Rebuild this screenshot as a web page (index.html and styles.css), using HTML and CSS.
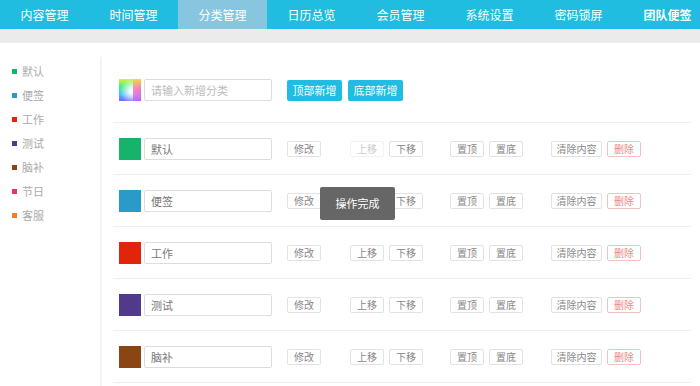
FILE: index.html
```html
<!DOCTYPE html>
<html lang="zh-CN">
<head>
    <meta charset="utf-8">
    <title>分类管理</title>
    <link rel="stylesheet" href="styles.css">
</head>
<body>
    <nav class="topnav">
        <a class="nav-item">内容管理</a>
        <a class="nav-item">时间管理</a>
        <a class="nav-item active">分类管理</a>
        <a class="nav-item">日历总览</a>
        <a class="nav-item">会员管理</a>
        <a class="nav-item">系统设置</a>
        <a class="nav-item">密码锁屏</a>
        <a class="nav-item team">团队便签</a>
    </nav>
    <div class="subbar"></div>

    <div class="layout">
        <aside class="sidebar">
            <div class="side-item"><span class="dot c-green"></span>默认</div>
            <div class="side-item"><span class="dot c-blue"></span>便签</div>
            <div class="side-item"><span class="dot c-red"></span>工作</div>
            <div class="side-item"><span class="dot c-purple"></span>测试</div>
            <div class="side-item"><span class="dot c-brown"></span>脑补</div>
            <div class="side-item"><span class="dot c-pink"></span>节日</div>
            <div class="side-item"><span class="dot c-orange"></span>客服</div>
        </aside>

        <main class="content">
            <div class="row add-row">
                <span class="swatch picker"></span>
                <input class="name-input" type="text" placeholder="请输入新增分类">
                <div class="add-buttons">
                    <button class="btn-add">顶部新增</button>
                    <button class="btn-add">底部新增</button>
                </div>
            </div>

            <div class="row">
                <span class="swatch c-green"></span>
                <input class="name-input" type="text" value="默认">
                <div class="actions">
                    <button class="btn">修改</button>
                    <div class="group move"><button class="btn disabled">上移</button><button class="btn">下移</button></div>
                    <div class="group pin"><button class="btn">置顶</button><button class="btn">置底</button></div>
                    <div class="group clear"><button class="btn wide">清除内容</button><button class="btn danger">删除</button></div>
                </div>
            </div>

            <div class="row">
                <span class="swatch c-blue"></span>
                <input class="name-input" type="text" value="便签">
                <div class="actions">
                    <button class="btn">修改</button>
                    <div class="group move"><button class="btn">上移</button><button class="btn">下移</button></div>
                    <div class="group pin"><button class="btn">置顶</button><button class="btn">置底</button></div>
                    <div class="group clear"><button class="btn wide">清除内容</button><button class="btn danger">删除</button></div>
                </div>
            </div>

            <div class="row">
                <span class="swatch c-red"></span>
                <input class="name-input" type="text" value="工作">
                <div class="actions">
                    <button class="btn">修改</button>
                    <div class="group move"><button class="btn">上移</button><button class="btn">下移</button></div>
                    <div class="group pin"><button class="btn">置顶</button><button class="btn">置底</button></div>
                    <div class="group clear"><button class="btn wide">清除内容</button><button class="btn danger">删除</button></div>
                </div>
            </div>

            <div class="row">
                <span class="swatch c-purple"></span>
                <input class="name-input" type="text" value="测试">
                <div class="actions">
                    <button class="btn">修改</button>
                    <div class="group move"><button class="btn">上移</button><button class="btn">下移</button></div>
                    <div class="group pin"><button class="btn">置顶</button><button class="btn">置底</button></div>
                    <div class="group clear"><button class="btn wide">清除内容</button><button class="btn danger">删除</button></div>
                </div>
            </div>

            <div class="row">
                <span class="swatch c-brown"></span>
                <input class="name-input" type="text" value="脑补">
                <div class="actions">
                    <button class="btn">修改</button>
                    <div class="group move"><button class="btn">上移</button><button class="btn">下移</button></div>
                    <div class="group pin"><button class="btn">置顶</button><button class="btn">置底</button></div>
                    <div class="group clear"><button class="btn wide">清除内容</button><button class="btn danger">删除</button></div>
                </div>
            </div>
        </main>
    </div>

    <div class="toast">操作完成</div>
</body>
</html>
```

FILE: styles.css
```css
* {
    box-sizing: border-box;
    margin: 0;
    padding: 0;
}

body {
    font-family: "Noto Sans CJK SC", "Liberation Sans", sans-serif;
    background: #fff;
    color: #666;
    overflow: hidden;
}

/* Top navigation */
.topnav {
    display: flex;
    height: 29px;
    background: #20bde0;
}

.nav-item {
    flex: 0 0 89px;
    text-align: center;
    line-height: 29px;
    font-size: 12px;
    color: #fff;
}

.nav-item.active {
    background: #88c5df;
}

.nav-item.team {
    font-weight: bold;
}

.subbar {
    height: 14px;
    background: #ebebeb;
}

/* Layout */
.layout {
    display: flex;
}

.sidebar {
    flex: 0 0 102px;
    margin-top: 14px;
    padding-top: 2px;
    border-right: 2px solid #f4f4f4;
    min-height: 340px;
}

.side-item {
    display: flex;
    align-items: center;
    height: 24px;
    padding-left: 12px;
    font-size: 11px;
    color: #aaa;
}

.dot {
    width: 5px;
    height: 5px;
    margin-right: 5px;
}

.c-green { background: #17b36b; }
.c-blue { background: #2a9bc9; }
.c-red { background: #e0250b; }
.c-purple { background: #513a8b; }
.c-brown { background: #8b4513; }
.c-pink { background: #e13b5b; }
.c-orange { background: #f67c2b; }

/* Content */
.content {
    flex: 1;
    padding: 21px 9px 0 11px;
}

.row {
    display: flex;
    align-items: center;
    padding: 15px 6px 14px;
    border-bottom: 1px solid #f0f0f0;
}

.add-row {
    padding-bottom: 21px;
}

.swatch {
    width: 22px;
    height: 22px;
    flex: 0 0 22px;
}

.picker {
    position: relative;
    background:
        radial-gradient(circle at 60% 55%, #fff 0, rgba(255, 255, 255, 0.9) 15%, rgba(255, 255, 255, 0) 70%),
        linear-gradient(to bottom, #d8f040 0%, #40f080 35%, #40c0ff 70%, #8060ff 100%),
        #fff;
}

.picker::after {
    content: "";
    position: absolute;
    right: 0;
    top: 0;
    width: 8px;
    height: 22px;
    background: linear-gradient(to bottom, #ffd040, #ff60c0, #c060ff);
    opacity: 0.8;
}

.name-input {
    width: 128px;
    height: 22px;
    margin-left: 3px;
    padding-left: 6px;
    border: 1px solid #ddd;
    border-radius: 2px;
    font-family: inherit;
    font-size: 11px;
    color: #777;
    outline: none;
}

.name-input::placeholder {
    color: #bbb;
}

.add-buttons {
    display: flex;
    gap: 6px;
    margin-left: 15px;
}

.btn-add {
    width: 55px;
    height: 21px;
    border: none;
    border-radius: 2px;
    background: #20bde0;
    color: #fff;
    font-family: inherit;
    font-size: 11px;
}

.actions {
    display: flex;
    align-items: center;
    margin-left: 15px;
}

.group {
    display: flex;
    gap: 5px;
}

.group.move { margin-left: 29px; }
.group.pin { margin-left: 27px; }
.group.clear { margin-left: 28px; }

.btn {
    width: 34px;
    height: 16px;
    padding: 0;
    border: 1px solid #e2e2e2;
    border-radius: 2px;
    background: #fff;
    font-family: inherit;
    font-size: 10px;
    line-height: 14px;
    color: #888;
}

.btn.wide {
    width: 51px;
}

.btn.disabled {
    border-color: #f2f2f2;
    color: #ccc;
}

.btn.danger {
    border-color: #f2c2c2;
    color: #e88;
}

/* Toast */
.toast {
    position: absolute;
    left: 320px;
    top: 187px;
    width: 75px;
    height: 33px;
    line-height: 33px;
    text-align: center;
    background: #666;
    border-radius: 2px;
    color: #fff;
    font-size: 11px;
}
```
